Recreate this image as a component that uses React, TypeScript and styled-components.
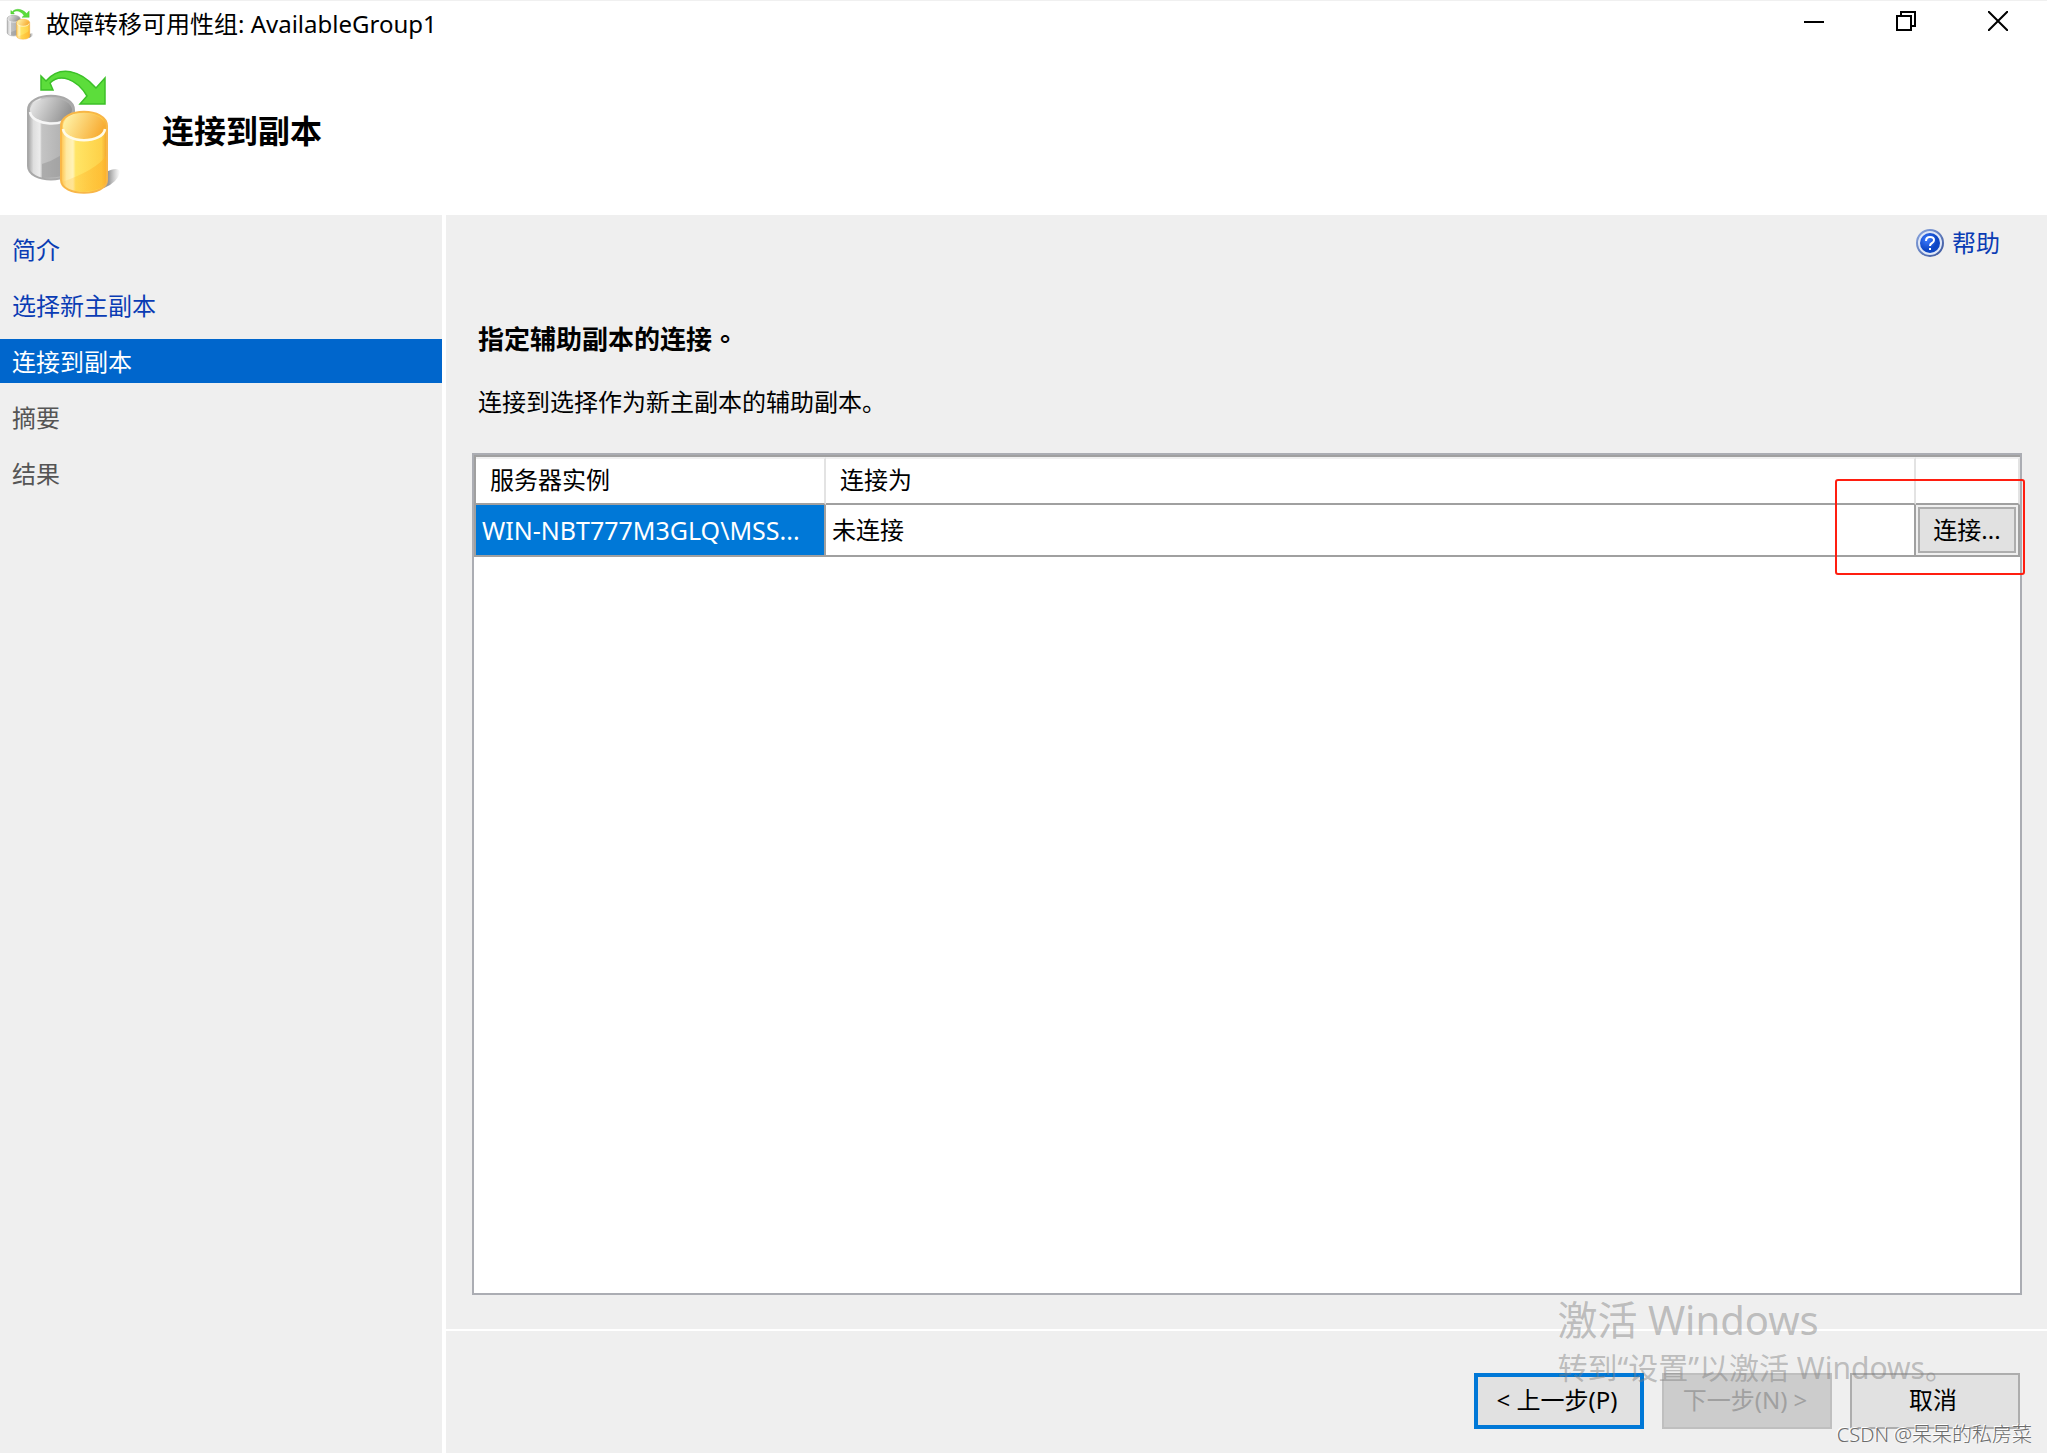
import React from "react";
import styled, { createGlobalStyle, css } from "styled-components";

const GlobalStyle = createGlobalStyle`
  *, *::before, *::after { box-sizing: border-box; }
  body {
    margin: 0;
    background: #fff;
    color: #000;
    font-family: "Noto Sans", "Noto Sans CJK SC", sans-serif;
    font-size: 24px;
    line-height: 32px;
  }
  button { font: inherit; color: inherit; margin: 0; }
`;

const Window = styled.div`
  position: relative;
  display: flex;
  flex-direction: column;
  min-height: 100vh;
  border-top: 1px solid #f0f0f0;
`;

const TitleBar = styled.header`
  display: flex;
  align-items: center;
  height: 46px;
  padding: 0 3px 0 6px;
  gap: 12px;
`;

const TitleText = styled.span`
  flex: 1;
`;

const WindowControls = styled.div`
  display: flex;
  align-self: flex-start;
`;

const ControlButton = styled.button`
  display: grid;
  place-items: center;
  width: 92px;
  height: 40px;
  padding: 0;
  border: 0;
  background: transparent;
`;

const Banner = styled.div`
  display: flex;
  align-items: center;
  height: 168px;
  padding: 0 26px 0 24px;
  gap: 40px;
`;

const PageTitle = styled.h1`
  margin: 0;
  font-size: 32px;
  line-height: 40px;
  font-weight: 700;
`;

const Body = styled.div`
  flex: 1;
  display: flex;
  gap: 4px;
`;

const Sidebar = styled.nav`
  width: 442px;
  flex: none;
  padding-top: 12px;
  background: #efefef;
`;

const StepList = styled.ol`
  display: flex;
  flex-direction: column;
  gap: 12px;
  margin: 0;
  padding: 0;
  list-style: none;
`;

type StepState = "done" | "current" | "pending";

const stepColors: Record<StepState, string> = {
  done: "#0a3cb4",
  current: "#ffffff",
  pending: "#555555",
};

const StepLink = styled.a<{ $state: StepState }>`
  display: block;
  padding: 7px 12px 5px;
  color: ${(p) => stepColors[p.$state]};
  background: ${(p) => (p.$state === "current" ? "#0066cc" : "transparent")};
  text-decoration: none;
`;

const Main = styled.main`
  flex: 1;
  min-width: 0;
  display: flex;
  flex-direction: column;
  gap: 2px;
`;

const Content = styled.section`
  flex: 1;
  display: flex;
  flex-direction: column;
  padding: 12px 25px 34px 26px;
  background: #efefef;
`;

const HelpLink = styled.a`
  display: flex;
  align-items: center;
  align-self: flex-end;
  gap: 8px;
  padding-right: 22px;
  color: #0a3cb4;
  text-decoration: none;
`;

const SectionTitle = styled.h2`
  margin: 64px 6px 0;
  font-size: 26px;
  line-height: 32px;
  font-weight: 700;
`;

const Description = styled.p`
  margin: 31px 6px 35px;
`;

const GridFrame = styled.div`
  flex: 1;
  border: 2px solid #abadb3;
  background: #fff;
`;

const ReplicaTable = styled.table`
  width: 100%;
  table-layout: fixed;
  border-collapse: separate;
  border-spacing: 0;
  border-top: 2px solid #a0a0a0;
  border-left: 2px solid #a0a0a0;
`;

const ServerCol = styled.col`
  width: 350px;
`;

const ActionCol = styled.col`
  width: 104px;
`;

const HeadCell = styled.th`
  height: 48px;
  padding: 0 0 2px 14px;
  border-top: 2px solid #f0f0f0;
  border-right: 2px solid #e3e3e3;
  border-bottom: 2px solid #a0a0a0;
  text-align: left;
  font-weight: 400;
  line-height: 32px;
`;

const Cell = styled.td<{ $selected?: boolean }>`
  height: 52px;
  padding: 0 6px;
  border-right: 2px solid #a0a0a0;
  border-bottom: 2px solid #a0a0a0;
  overflow: hidden;
  white-space: nowrap;
  text-overflow: ellipsis;
  ${(p) =>
    p.$selected &&
    css`
      background: #0078d7;
      color: #fff;
      font-size: 25px;
    `}
`;

const ActionCell = styled.td`
  position: relative;
  height: 52px;
  padding: 2px;
  border-right: 2px solid #a0a0a0;
  border-bottom: 2px solid #a0a0a0;
  background: #f0f0f0;
`;

const ConnectButton = styled.button`
  display: block;
  width: 100%;
  height: 46px;
  padding: 0;
  border: 2px solid #adadad;
  background: #e1e1e1;
  white-space: nowrap;
`;

const Highlight = styled.span`
  position: absolute;
  top: -26px;
  right: -7px;
  width: 190px;
  height: 96px;
  border: 2px solid #ff1e10;
  border-radius: 3px;
  pointer-events: none;
`;

const Footer = styled.footer`
  display: flex;
  justify-content: flex-end;
  align-items: flex-start;
  gap: 18px;
  height: 122px;
  padding: 42px 27px 0;
  background: #efefef;
`;

const WizardButton = styled.button<{ $primary?: boolean }>`
  width: 170px;
  height: 56px;
  padding: 0 4px 2px 0;
  border: 2px solid #adadad;
  background: #e1e1e1;
  ${(p) =>
    p.$primary &&
    css`
      border: 4px solid #0078d7;
    `}
  &:disabled {
    border-color: #bfbfbf;
    background: #cccccc;
    color: #a0a0a0;
  }
`;

const ActivationNotice = styled.div`
  position: absolute;
  right: 92px;
  bottom: 61px;
  color: rgba(125, 125, 125, 0.46);
  pointer-events: none;
`;

const NoticeTitle = styled.div`
  font-size: 40px;
  line-height: 48px;
`;

const NoticeText = styled.div`
  font-size: 30px;
  line-height: 48px;
`;

const Credit = styled.div`
  position: absolute;
  right: 15px;
  bottom: 4px;
  font-size: 20px;
  line-height: 28px;
  font-weight: 300;
  color: #6c6c6c;
  text-shadow: -1px -1px 0 #fff;
  pointer-events: none;
`;

function FailoverIcon({ id, width, height }: { id: string; width: number; height: number }) {
  const ref = (name: string) => `url(#${id}-${name})`;
  return (
    <svg
      width={width}
      height={height}
      viewBox="0 0 98 130"
      preserveAspectRatio="none"
      aria-hidden="true"
    >
      <defs>
        <linearGradient id={`${id}-grey`} x1="0" x2="1">
          <stop offset="0" stopColor="#a2a2a2" />
          <stop offset="0.12" stopColor="#dedede" />
          <stop offset="0.26" stopColor="#ececec" />
          <stop offset="0.3" stopColor="#c4c4c4" />
          <stop offset="1" stopColor="#a8a8a8" />
        </linearGradient>
        <linearGradient id={`${id}-greyTop`} x1="0" x2="1" y1="0.3" y2="0.6">
          <stop offset="0" stopColor="#e6e6e6" />
          <stop offset="1" stopColor="#8e8e8e" />
        </linearGradient>
        <linearGradient id={`${id}-gold`} x1="0" x2="1">
          <stop offset="0" stopColor="#ffc247" />
          <stop offset="0.12" stopColor="#ffe9a0" />
          <stop offset="0.26" stopColor="#fff3b8" />
          <stop offset="0.32" stopColor="#ffe566" />
          <stop offset="0.88" stopColor="#fed148" />
          <stop offset="1" stopColor="#f2a42c" />
        </linearGradient>
        <linearGradient id={`${id}-goldTop`} x1="0" x2="1" y1="0.3" y2="0.6">
          <stop offset="0" stopColor="#fff3a8" />
          <stop offset="1" stopColor="#f7a92e" />
        </linearGradient>
        <linearGradient id={`${id}-lower`} x1="0" x2="1">
          <stop offset="0" stopColor="#ffb62c" stopOpacity="0.1" />
          <stop offset="1" stopColor="#ffb62c" stopOpacity="0.7" />
        </linearGradient>
        <linearGradient id={`${id}-shadow`} x1="0" x2="1">
          <stop offset="0.3" stopColor="#9a9a9a" />
          <stop offset="1" stopColor="#b0b0b0" stopOpacity="0" />
        </linearGradient>
      </defs>
      <path d="M82 106 Q94 100 96 106 Q94 116 80 122 Z" fill={ref("shadow")} />
      <path
        d="M4 44 C4 25 50 25 50 44 V100 C50 118 4 118 4 100 Z"
        fill={ref("grey")}
        stroke="#a8a8a8"
        strokeWidth="2"
      />
      <path d="M18 98 Q38 92 49 78 V100 Q48 112 18 112 Z" fill="#909090" opacity="0.45" />
      <ellipse cx="27" cy="44" rx="21" ry="12" fill={ref("greyTop")} />
      <path d="M6 46 C8 60 42 62 48 48" fill="none" stroke="#f6f6f6" strokeWidth="2.5" />
      <path
        d="M37 60 C37 41 83 41 83 60 V114 C83 131 37 131 37 114 Z"
        fill={ref("gold")}
        stroke="#f8b648"
        strokeWidth="2"
      />
      <path d="M38 116 Q72 104 82 90 V114 C82 129 38 129 38 116 Z" fill={ref("lower")} />
      <ellipse cx="60" cy="60" rx="21" ry="13" fill={ref("goldTop")} />
      <path d="M39 63 C41 78 79 78 81 63" fill="none" stroke="#fffbe8" strokeWidth="2.5" />
      <path
        d="M17 10 L22 15 C36 -1 56 4 72 22 L81 12 V38 H56 L63 30 C53 13 36 7 26 17 L29 24 H17 Z"
        fill="#5cdd3b"
        stroke="#3cc028"
        strokeWidth="1.5"
      />
    </svg>
  );
}

function HelpIcon() {
  return (
    <svg width="28" height="28" viewBox="0 0 28 28" aria-hidden="true">
      <defs>
        <linearGradient id="helpRing" x1="0" y1="0" x2="1" y2="1">
          <stop offset="0" stopColor="#8aa6e0" />
          <stop offset="1" stopColor="#3a559c" />
        </linearGradient>
        <radialGradient id="helpFill" cx="0.35" cy="0.35">
          <stop offset="0" stopColor="#3d7bff" />
          <stop offset="1" stopColor="#0d46c4" />
        </radialGradient>
      </defs>
      <circle cx="14" cy="14" r="13" fill="#dfe7f7" stroke="url(#helpRing)" strokeWidth="2" />
      <circle cx="14" cy="14" r="10" fill="url(#helpFill)" />
      <path
        d="M10 12 Q10 8 14 8 Q18 8 18 11 Q18 13 16 14 Q14 15 14 17"
        fill="none"
        stroke="#fff"
        strokeWidth="2"
      />
      <rect x="13" y="19" width="2" height="2" fill="#fff" />
    </svg>
  );
}

const steps: { label: string; state: StepState }[] = [
  { label: "简介", state: "done" },
  { label: "选择新主副本", state: "done" },
  { label: "连接到副本", state: "current" },
  { label: "摘要", state: "pending" },
  { label: "结果", state: "pending" },
];

export default function App() {
  return (
    <>
      <GlobalStyle />
      <Window lang="zh-CN">
        <TitleBar>
          <FailoverIcon id="small" width={28} height={32} />
          <TitleText>故障转移可用性组: AvailableGroup1</TitleText>
          <WindowControls>
            <ControlButton aria-label="最小化">
              <svg width="20" height="20" viewBox="0 0 20 20">
                <path d="M0 11H20" stroke="#000" strokeWidth="2" />
              </svg>
            </ControlButton>
            <ControlButton aria-label="还原">
              <svg width="20" height="20" viewBox="0 0 20 20" fill="none" stroke="#000" strokeWidth="2">
                <path d="M1 5H15V19H1Z M5 5V1H19V15H15" />
              </svg>
            </ControlButton>
            <ControlButton aria-label="关闭">
              <svg width="20" height="20" viewBox="0 0 20 20">
                <path d="M0 0L20 20M20 0L0 20" stroke="#000" strokeWidth="2" />
              </svg>
            </ControlButton>
          </WindowControls>
        </TitleBar>
        <Banner>
          <FailoverIcon id="large" width={98} height={130} />
          <PageTitle>连接到副本</PageTitle>
        </Banner>
        <Body>
          <Sidebar>
            <StepList>
              {steps.map((step) => (
                <li key={step.label}>
                  <StepLink
                    href="#"
                    $state={step.state}
                    aria-current={step.state === "current" ? "step" : undefined}
                  >
                    {step.label}
                  </StepLink>
                </li>
              ))}
            </StepList>
          </Sidebar>
          <Main>
            <Content>
              <HelpLink href="#">
                <HelpIcon />
                帮助
              </HelpLink>
              <SectionTitle>
                指定辅助副本的连接<span lang="zh-TW">。</span>
              </SectionTitle>
              <Description>连接到选择作为新主副本的辅助副本。</Description>
              <GridFrame>
                <ReplicaTable>
                  <colgroup>
                    <ServerCol />
                    <col />
                    <ActionCol />
                  </colgroup>
                  <thead>
                    <tr>
                      <HeadCell scope="col">服务器实例</HeadCell>
                      <HeadCell scope="col">连接为</HeadCell>
                      <HeadCell />
                    </tr>
                  </thead>
                  <tbody>
                    <tr>
                      <Cell $selected>WIN-NBT777M3GLQ\MSS...</Cell>
                      <Cell>未连接</Cell>
                      <ActionCell>
                        <ConnectButton>连接...</ConnectButton>
                        <Highlight />
                      </ActionCell>
                    </tr>
                  </tbody>
                </ReplicaTable>
              </GridFrame>
            </Content>
            <Footer>
              <WizardButton $primary>&lt; 上一步(P)</WizardButton>
              <WizardButton disabled>下一步(N) &gt;</WizardButton>
              <WizardButton>取消</WizardButton>
            </Footer>
          </Main>
        </Body>
        <ActivationNotice>
          <NoticeTitle>激活 Windows</NoticeTitle>
          <NoticeText>转到“设置”以激活 Windows。</NoticeText>
        </ActivationNotice>
        <Credit>CSDN @呆呆的私房菜</Credit>
      </Window>
    </>
  );
}
